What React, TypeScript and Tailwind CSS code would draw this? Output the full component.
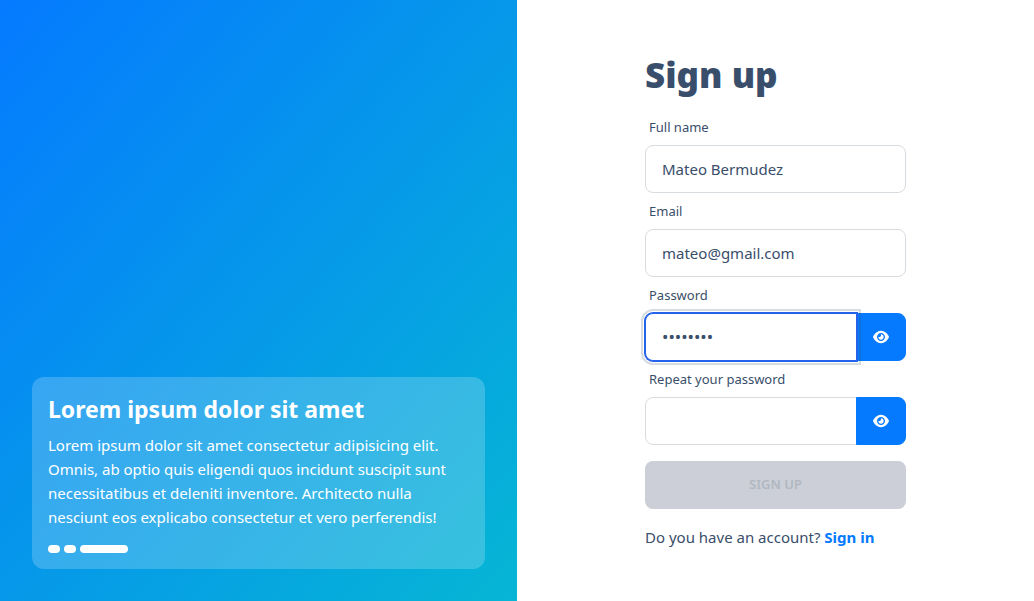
import { useState } from "react";
import type { ReactNode } from "react";

function EyeIcon() {
  return (
    <svg viewBox="0 0 576 512" className="h-4 w-4" fill="currentColor" aria-hidden="true">
      <path d="M279.6 160.4C282.4 160.1 285.2 160 288 160C341 160 384 202.1 384 256C384 309 341 352 288 352C234.1 352 192 309 192 256C192 253.2 192.1 250.4 192.4 247.6C201.7 252.1 212.5 256 224 256C259.3 256 288 227.3 288 192C288 180.5 284.1 169.7 279.6 160.4zM480.6 112.6C527.4 156 558.7 207.1 573.5 243.7C576.8 251.6 576.8 260.4 573.5 268.3C558.7 304 527.4 355.1 480.6 399.4C433.5 443.2 368.8 480 288 480C207.2 480 142.5 443.2 95.42 399.4C48.62 355.1 17.34 304 2.461 268.3C-.8205 260.4-.8205 251.6 2.461 243.7C17.34 207.1 48.62 156 95.42 112.6C142.5 68.84 207.2 32 288 32C368.8 32 433.5 68.84 480.6 112.6zM288 112C208.5 112 144 176.5 144 256C144 335.5 208.5 400 288 400C367.5 400 432 335.5 432 256C432 176.5 367.5 112 288 112z" />
    </svg>
  );
}

function Field({ id, label, children }: { id: string; label: string; children: ReactNode }) {
  return (
    <div className="flex flex-col">
      <label htmlFor={id} className="px-1 py-2 text-[13px] leading-5">
        {label}
      </label>
      {children}
    </div>
  );
}

type TextFieldProps = { id: string; label: string; type: string; initial: string };

function TextField({ id, label, type, initial }: TextFieldProps) {
  const [value, setValue] = useState(initial);
  return (
    <Field id={id} label={label}>
      <input
        id={id}
        type={type}
        value={value}
        onChange={(e) => setValue(e.target.value)}
        className="h-12 w-full min-w-0 rounded-lg border border-[#d7dce1] bg-white px-4 text-[15px]"
      />
    </Field>
  );
}

type PasswordFieldProps = { id: string; label: string; initial: string; active?: boolean };

function PasswordField({ id, label, initial, active = false }: PasswordFieldProps) {
  const [value, setValue] = useState(initial);
  const [visible, setVisible] = useState(false);
  const state = active
    ? "relative border-[#2563eb] ring-1 ring-[#2563eb] outline-2 outline-offset-2 outline-solid outline-[#394e6a]/20"
    : "border-[#d7dce1]";
  return (
    <Field id={id} label={label}>
      <div className="flex">
        <input
          id={id}
          type={visible ? "text" : "password"}
          value={value}
          onChange={(e) => setValue(e.target.value)}
          className={`h-12 w-full min-w-0 rounded-l-lg border bg-white px-4 text-[17px] ${state}`}
        />
        <button
          type="button"
          aria-label="Toggle password visibility"
          onClick={() => setVisible(!visible)}
          className="-ml-px flex h-12 shrink-0 items-center rounded-r-lg border border-[#057aff] bg-[#057aff] px-4 text-white"
        >
          <EyeIcon />
        </button>
      </div>
    </Field>
  );
}

export default function App() {
  return (
    <main className="grid min-h-screen grid-cols-2 bg-white font-['Noto_Sans',sans-serif] text-[#394e6a]">
      <section className="flex flex-col justify-end bg-linear-to-br/srgb from-[#057aff] to-[#06b6d4] p-8">
        <div className="rounded-xl bg-white/20 p-4 text-white">
          <h2 className="text-[23px] leading-8 font-bold">Lorem ipsum dolor sit amet</h2>
          <p className="mt-2 text-[15px] leading-6">
            Lorem ipsum dolor sit amet consectetur adipisicing elit. Omnis, ab optio quis eligendi
            quos incidunt suscipit sunt necessitatibus et deleniti inventore. Architecto nulla
            nesciunt eos explicabo consectetur et vero perferendis!
          </p>
          <div className="mt-4 flex gap-1">
            <span className="h-2 w-3 rounded-full bg-white" />
            <span className="h-2 w-3 rounded-full bg-white" />
            <span className="h-2 w-12 rounded-full bg-white" />
          </div>
        </div>
      </section>

      <section className="flex items-center justify-center">
        <form className="flex w-[261px] flex-col" onSubmit={(e) => e.preventDefault()}>
          <h1 className="mb-3 text-[35px] leading-11 font-black">Sign up</h1>
          <TextField id="name" label="Full name" type="text" initial="Mateo Bermudez" />
          <TextField id="email" label="Email" type="email" initial="mateo@gmail.com" />
          <PasswordField id="password" label="Password" initial="12345678" active />
          <PasswordField id="repeat" label="Repeat your password" initial="" />
          <button
            type="submit"
            disabled
            className="mt-4 h-12 rounded-lg bg-[#cccfd7] text-[13px] font-semibold text-[#b0b8c1] uppercase"
          >
            Sign up
          </button>
          <p className="mt-4 text-[15px] leading-6">
            Do you have an account?{" "}
            <a href="#signin" className="font-bold text-[#057aff]">
              Sign in
            </a>
          </p>
        </form>
      </section>
    </main>
  );
}
